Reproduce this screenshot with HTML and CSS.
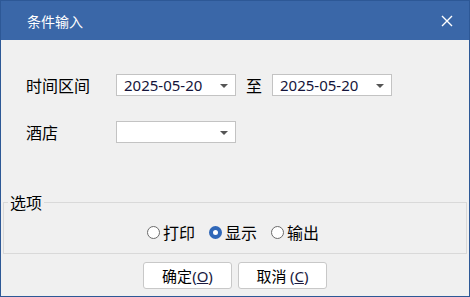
FILE: index.html
```html
<!DOCTYPE html>
<html lang="zh">
<head>
<meta charset="utf-8">
<title>条件输入</title>
<link rel="stylesheet" href="styles.css">
</head>
<body>
<div class="window">
  <div class="titlebar">
    <span class="title">条件输入</span>
    <svg class="close" width="12" height="12" viewBox="0 0 12 12"><path d="M1 1L11 11M11 1L1 11" stroke="#fff" stroke-width="1.4" fill="none"/></svg>
  </div>
  <div class="content">
    <div class="row row-date">
      <span class="label">时间区间</span>
      <div class="combo"><span class="value">2025-05-20</span><span class="arrow"></span></div>
      <span class="to">至</span>
      <div class="combo"><span class="value">2025-05-20</span><span class="arrow"></span></div>
    </div>
    <div class="row row-hotel">
      <span class="label">酒店</span>
      <div class="combo"><span class="value"></span><span class="arrow"></span></div>
    </div>
    <fieldset class="group">
      <legend class="legend">选项</legend>
      <div class="radios">
        <label class="radio"><span class="dot"></span>打印</label>
        <label class="radio checked"><span class="dot"></span>显示</label>
        <label class="radio"><span class="dot"></span>输出</label>
      </div>
    </fieldset>
    <div class="buttons">
      <button class="btn">确定<span class="mn">(<u>O</u>)</span></button>
      <button class="btn">取消 <span class="mn">(<u>C</u>)</span></button>
    </div>
  </div>
</div>
</body>
</html>
```
FILE: styles.css
```css
* { box-sizing: border-box; }
html, body { margin: 0; padding: 0; }
body {
  width: 470px;
  height: 297px;
  overflow: hidden;
  font-family: "Noto Sans CJK SC", "Noto Sans", sans-serif;
  color: #000;
}
.window {
  width: 470px;
  height: 297px;
  border: 1px solid #2d5896;
  background: #f0f0f0;
  display: flex;
  flex-direction: column;
}
.titlebar {
  height: 39px;
  background: #3a67a8;
  display: flex;
  align-items: center;
  justify-content: space-between;
  padding: 0 16px 0 26px;
}
.title {
  color: #fff;
  font-size: 14px;
  line-height: 1;
}
.close { display: block; }
.content {
  flex: 1;
  display: flex;
  flex-direction: column;
}
.row {
  display: flex;
  align-items: center;
  height: 22px;
  padding-left: 25px;
}
.row-date { margin-top: 34px; }
.row-hotel { margin-top: 25px; }
.label {
  width: 90px;
  font-size: 16px;
  line-height: 1;
}
.combo {
  width: 120px;
  height: 22px;
  background: #fff;
  border: 1px solid #c3c3c3;
  display: flex;
  align-items: center;
  justify-content: space-between;
  padding: 0 7px 0 7px;
}
.value {
  font-family: "Noto Sans", sans-serif;
  font-size: 15px;
  color: #14143a;
  line-height: 1;
}
.arrow {
  width: 0;
  height: 0;
  border-left: 4px solid transparent;
  border-right: 4px solid transparent;
  border-top: 4px solid #555;
  margin-top: 1px;
}
.to {
  font-size: 16px;
  line-height: 1;
  margin: 0 10px 0 10px;
}
.group {
  margin: 50px 2px 0 2px;
  padding: 0;
  border: 1px solid #d9d9d9;
  height: 61px;
}
.legend {
  font-size: 16px;
  line-height: 18px;
  padding: 0 2px;
  margin-left: 4px;
}
.radios {
  display: flex;
  justify-content: center;
  align-items: center;
  gap: 14px;
  margin-top: 13px;
  padding-right: 4px;
}
.radio {
  display: flex;
  align-items: center;
  font-size: 16px;
  line-height: 1;
}
.dot {
  width: 13px;
  height: 13px;
  border-radius: 50%;
  border: 1px solid #6b6b6b;
  background: #fff;
  margin-right: 3px;
}
.radio.checked .dot {
  border: 4px solid #2f67b8;
  background: #fff;
}
.buttons {
  display: flex;
  justify-content: center;
  gap: 6px;
  margin-top: 8px;
}
.btn {
  width: 89px;
  height: 27px;
  background: #fff;
  border: 1px solid #c8c8c8;
  border-radius: 3px;
  font-family: "Noto Sans CJK SC", "Noto Sans", sans-serif;
  font-size: 15px;
  line-height: 1;
  color: #000;
  padding: 0;
}
.mn { font-family: "Noto Sans", sans-serif; color: #1a1a40; }
```
